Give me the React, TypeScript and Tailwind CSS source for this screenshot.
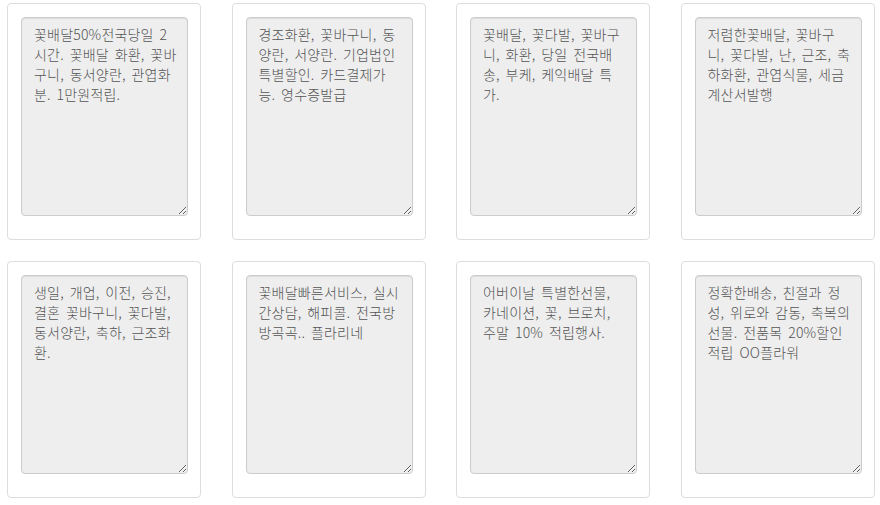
// each note keeps the line breaks it is shown with
const notes = [
  '꽃배달50%전국당일 2\n시간. 꽃배달 화환, 꽃바\n구니, 동서양란, 관엽화\n분. 1만원적립.',
  '경조화환, 꽃바구니, 동\n양란, 서양란. 기업법인\n특별할인. 카드결제가\n능. 영수증발급',
  '꽃배달, 꽃다발, 꽃바구\n니, 화환, 당일 전국배\n송, 부케, 케익배달 특\n가.',
  '저렴한꽃배달, 꽃바구\n니, 꽃다발, 난, 근조, 축\n하화환, 관엽식물, 세금\n계산서발행',
  '생일, 개업, 이전, 승진,\n결혼 꽃바구니, 꽃다발,\n동서양란, 축하, 근조화\n환.',
  '꽃배달빠른서비스, 실시\n간상담, 해피콜. 전국방\n방곡곡.. 플라리네',
  '어버이날 특별한선물,\n카네이션, 꽃, 브로치,\n주말 10% 적립행사.',
  '정확한배송, 친절과 정\n성, 위로와 감동, 축복의\n선물. 전품목 20%할인\n적립 OO플라워',
];

export default function App() {
  return (
    <div className="min-h-[505px] w-[880px] bg-white pl-[7px] pt-[3px] font-['Noto_Sans_CJK_KR','Noto_Sans',sans-serif]">
      <div className="grid grid-cols-[repeat(4,194px)] gap-x-[30.5px] gap-y-[21px]">
        {notes.map((text, i) => (
          <div key={i} className="h-[237px] rounded-[4px] border border-[#dddddd] bg-white pl-[13px] pt-[13px]">
            <textarea
              defaultValue={text}
              readOnly
              className="block h-[199px] w-[167px] resize-y overflow-hidden rounded-[4px] border border-[#cccccc] bg-[#eeeeee] pl-[12px] pr-[4px] pt-[6px] text-[14px] font-light leading-[20px] tracking-[0.2px] [word-spacing:2.5px] text-[#555555] outline-none shadow-[inset_0_1px_1px_rgba(0,0,0,0.075)]"
            />
          </div>
        ))}
      </div>
    </div>
  );
}
